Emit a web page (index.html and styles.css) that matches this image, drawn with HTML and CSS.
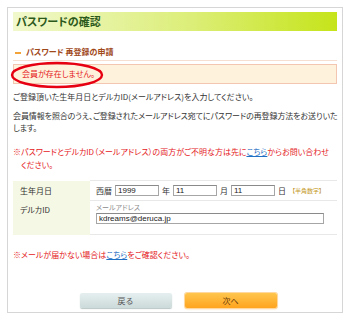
FILE: index.html
```html
<!DOCTYPE html>
<html>
<head>
  <meta charset="utf-8">
  <title>パスワードの確認</title>
  <link rel="stylesheet" href="styles.css">
</head>
<body>
  <div class="panel">
    <h1 class="title">パスワードの確認</h1>

    <h2 class="subtitle"><span class="dash"></span>パスワード 再登録の申請</h2>

    <div class="error-box">
      会員が存在しません。
      <svg class="ring" width="94" height="28" viewBox="0 0 94 28">
        <ellipse cx="47" cy="14" rx="45" ry="12" fill="none" stroke="#e60012" stroke-width="2.4"/>
      </svg>
    </div>

    <p class="text first">ご登録頂いた生年月日とデルカID(メールアドレス)を入力してください。</p>
    <div class="text tight">
      <div>会員情報を照合のうえ、ご登録されたメールアドレス宛てにパスワードの再登録方法をお送りいた</div>
      <div>します。</div>
    </div>
    <div class="text note">
      <div>※パスワードとデルカID（メールアドレス）の両方がご不明な方は先に<a href="#">こちら</a>からお問い合わせ</div>
      <div class="cont">ください。</div>
    </div>

    <table class="form-table">
      <tr class="row-birth">
        <th>生年月日</th>
        <td>
          <div class="date-line">
            <span>西暦</span>
            <input class="num" type="text" value="1999">
            <span>年</span>
            <input class="num" type="text" value="11">
            <span>月</span>
            <input class="num" type="text" value="11">
            <span>日</span>
            <span class="hint">【半角数字】</span>
          </div>
        </td>
      </tr>
      <tr class="row-id">
        <th>デルカID</th>
        <td>
          <div class="caption">メールアドレス</div>
          <input class="mail" type="text" value="kdreams@deruca.jp">
        </td>
      </tr>
    </table>

    <p class="text note mail-note">※メールが届かない場合は<a href="#">こちら</a>をご確認ください。</p>

    <div class="buttons">
      <button class="btn btn-back">戻る</button>
      <button class="btn btn-next">次へ</button>
    </div>
  </div>
</body>
</html>
```

FILE: styles.css
```css
body {
  margin: 0;
  padding: 7px;
  background: #fff;
  font-family: "Noto Sans CJK JP", "Noto Sans", sans-serif;
  font-size: 8px;
  color: #333;
  font-feature-settings: "palt";
}

.panel {
  box-sizing: border-box;
  width: 336px;
  height: 306px;
  border: 1px solid #d6d6d6;
  padding: 4px 5px 0;
}

.title {
  margin: 0;
  height: 19px;
  line-height: 19px;
  padding-left: 3px;
  font-size: 11px;
  font-weight: bold;
  color: #2c5a1c;
  background: linear-gradient(to right, #f1f8cc, #dcee78 55%, #c6e41a);
}

.subtitle {
  margin: 13px 0 0;
  height: 16px;
  line-height: 16px;
  padding-left: 2px;
  font-size: 8px;
  font-weight: bold;
  color: #a0481a;
  border-bottom: 1px solid #f6ded0;
}

.dash {
  display: inline-block;
  width: 6px;
  height: 2px;
  margin-right: 5px;
  vertical-align: middle;
  background: #f2a43a;
}

.error-box {
  position: relative;
  margin-top: 3px;
  height: 18px;
  line-height: 18px;
  padding-left: 8px;
  color: #e4201c;
  background: #fff2dc;
  border: 1px solid #f2c6b0;
}

.ring {
  position: absolute;
  left: -4px;
  top: -4px;
}

.text {
  margin: 0;
  margin-top: 7px;
  line-height: 12px;
  white-space: nowrap;
}

.text.first {
  margin-top: 7px;
}

.text.tight {
  letter-spacing: -0.1px;
}

.note {
  color: #e4201c;
  margin-top: 11px;
  line-height: 13px;
}

.note .cont {
  padding-left: 1em;
}

.note a {
  color: #1f6fc4;
}

.form-table {
  width: 100%;
  margin-top: 9px;
  border-collapse: collapse;
}

.form-table th {
  width: 70px;
  padding: 0 0 0 7px;
  text-align: left;
  font-weight: normal;
  background: #f5f8e4;
  vertical-align: top;
}

.form-table td {
  padding: 0 0 0 6px;
  border-top: 1px solid #e8e8e8;
  border-bottom: 1px solid #e8e8e8;
}

.row-birth th,
.row-birth td {
  height: 19px;
  vertical-align: middle;
}

.row-id th {
  padding-top: 3px;
}

.row-id td {
  height: 33px;
  vertical-align: top;
}

.date-line {
  display: flex;
  align-items: center;
  gap: 3px;
}

input {
  box-sizing: border-box;
  height: 11px;
  margin: 0;
  padding: 0 2px;
  font-family: "Liberation Sans", sans-serif;
  font-size: 8px;
  color: #222;
  border: 1px solid #a6a6a6;
  border-top-color: #8a8a8a;
  background: #fff;
}

.num {
  width: 44px;
}

.hint {
  margin-left: 3px;
  font-size: 6px;
  color: #c49a2c;
}

.caption {
  margin-top: 2px;
  line-height: 9px;
  font-size: 7px;
  color: #8c8c8c;
}

.mail {
  width: 228px;
  margin-top: 1px;
}

.mail-note {
  margin-top: 13px;
}

.buttons {
  display: flex;
  justify-content: center;
  gap: 13px;
  margin-top: 32px;
  padding-left: 6px;
}

.btn {
  width: 92px;
  height: 15px;
  padding: 0;
  font-family: "Noto Sans CJK JP", sans-serif;
  font-size: 8px;
  border: none;
  border-radius: 2px;
  cursor: pointer;
}

.btn-back {
  color: #555;
  background: linear-gradient(#e6efef, #ccdada);
  box-shadow: 0 1px 1px #b8c6c6;
}

.btn-next {
  color: #6a3a08;
  background: linear-gradient(#ffc64e, #ffa41e);
  box-shadow: 0 0 0 1px #ffd8a0, 0 1px 2px #ffcf90;
}
```
